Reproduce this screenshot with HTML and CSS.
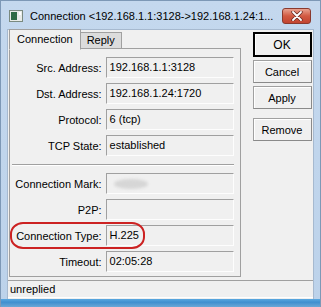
FILE: index.html
```html
<!DOCTYPE html>
<html lang="en">
<head>
    <meta charset="UTF-8">
    <title>Connection</title>
    <link rel="stylesheet" href="styles.css">
</head>
<body>
    <div class="window">
        <div class="titlebar">
            <svg class="app-icon" width="14" height="12" viewBox="0 0 14 12">
                <rect x="0.5" y="0.5" width="13" height="11" fill="#e8ece8" stroke="#7a8a80"/>
                <rect x="2" y="2" width="6" height="8" fill="#2e6b44"/>
                <rect x="10" y="2" width="2" height="3" fill="#ffffff"/>
            </svg>
            <span class="title">Connection &lt;192.168.1.1:3128-&gt;192.168.1.24:1...</span>
            <div class="close">
                <svg width="12" height="10" viewBox="0 0 12 10">
                    <path d="M2 1 L10 9 M10 1 L2 9" stroke="#6b2a22" stroke-width="3.4" stroke-linecap="round"/>
                    <path d="M2 1 L10 9 M10 1 L2 9" stroke="#ffffff" stroke-width="1.8" stroke-linecap="round"/>
                </svg>
            </div>
        </div>
        <div class="client">
            <div class="main">
                <div class="tabs">
                    <div class="tab-row">
                        <div class="tab active">Connection</div>
                        <div class="tab">Reply</div>
                        <div class="tab-fill"></div>
                    </div>
                    <div class="panel">
                        <div class="row"><span class="label">Src. Address:</span><span class="field">192.168.1.1:3128</span></div>
                        <div class="row"><span class="label">Dst. Address:</span><span class="field">192.168.1.24:1720</span></div>
                        <div class="row"><span class="label">Protocol:</span><span class="field">6 (tcp)</span></div>
                        <div class="row"><span class="label">TCP State:</span><span class="field">established</span></div>
                        <div class="separator"></div>
                        <div class="row"><span class="label">Connection Mark:</span><span class="field"><span class="blur"></span></span></div>
                        <div class="row"><span class="label">P2P:</span><span class="field"></span></div>
                        <div class="row marked"><span class="label">Connection Type:</span><span class="field">H.225</span><span class="ring"></span></div>
                        <div class="row"><span class="label">Timeout:</span><span class="field">02:05:28</span></div>
                    </div>
                </div>
                <div class="buttons">
                    <button class="default">OK</button>
                    <button>Cancel</button>
                    <button>Apply</button>
                    <button class="spaced">Remove</button>
                </div>
            </div>
            <div class="statusbar">unreplied</div>
        </div>
        <div class="bottom-frame"></div>
    </div>
</body>
</html>
```

FILE: styles.css
```css
body {
    margin: 0;
    width: 321px;
    height: 307px;
    overflow: hidden;
    font-family: 'Liberation Sans', Arial, sans-serif;
    font-size: 11px;
    color: #000;
}
.window {
    box-sizing: border-box;
    width: 321px;
    height: 307px;
    display: flex;
    flex-direction: column;
    background: linear-gradient(#c4d8ee, #bcd2ea);
    border: 1px solid #7d98b6;
    border-bottom: none;
}
.titlebar {
    height: 28px;
    flex: none;
    display: flex;
    align-items: center;
    padding: 0 9px 0 8px;
    gap: 7px;
}
.app-icon {
    margin-top: 1px;
}
.title {
    flex: 1;
    font-size: 11px;
    color: #000;
    white-space: nowrap;
    overflow: hidden;
    margin-top: 2px;
}
.close {
    width: 27px;
    height: 14px;
    margin-top: 1px;
    border: 1px solid #8a3a2e;
    border-radius: 3px;
    background: linear-gradient(#e8a290, #d25a42 50%, #c24430);
    display: flex;
    align-items: center;
    justify-content: center;
}
.client {
    flex: 1;
    margin: 0 6px;
    background: #f0f0f0;
    border: 1px solid #a6b9cf;
    border-bottom: none;
    display: flex;
    flex-direction: column;
}
.main {
    flex: 1;
    display: flex;
    padding: 0 0 0 1px;
}
.tabs {
    width: 232px;
    display: flex;
    flex-direction: column;
}
.tab-row {
    display: flex;
    align-items: flex-end;
    height: 19px;
}
.tab {
    height: 15px;
    padding: 0 6px;
    line-height: 15px;
    border: 1px solid #a0a0a0;
    background: #dcdcdc;
    margin-left: -1px;
}
.tab.active {
    height: 19px;
    line-height: 18px;
    background: #f0f0f0;
    border-bottom: 1px solid #f0f0f0;
    margin-left: 0;
    padding: 0 7px;
    position: relative;
    z-index: 1;
    margin-bottom: -1px;
}
.tab-fill {
    flex: 1;
    border-bottom: 1px solid #a0a0a0;
}
.panel {
    height: 219px;
    border: 1px solid #a0a0a0;
    border-top: none;
    padding: 8px 6px 0 1px;
    display: flex;
    flex-direction: column;
    gap: 5px;
}
.row {
    display: flex;
    align-items: center;
    gap: 4px;
    position: relative;
}
.label {
    width: 91px;
    text-align: right;
    white-space: nowrap;
}
.field {
    box-sizing: border-box;
    width: 129px;
    height: 21px;
    line-height: 19px;
    padding-left: 3px;
    border: 1px solid #a0a0a0;
    border-right-color: #fdfdfd;
    border-bottom-color: #fdfdfd;
    background: #f0f0f0;
    position: relative;
    overflow: hidden;
}
.blur {
    position: absolute;
    left: 7px;
    top: 5px;
    width: 34px;
    height: 10px;
    border-radius: 50%;
    background: #d6d6d6;
    filter: blur(1.5px);
}
.separator {
    margin: 3px 0 2px 1px;
    border-top: 1px solid #a0a0a0;
    border-bottom: 1px solid #ffffff;
}
.ring {
    position: absolute;
    left: -1px;
    top: -3px;
    width: 131px;
    height: 23px;
    border: 2px solid #cc2222;
    border-radius: 13px / 12px;
}
.buttons {
    flex: 1;
    display: flex;
    flex-direction: column;
    align-items: center;
    padding-top: 2px;
    padding-left: 10px;
    gap: 3px;
}
button {
    width: 59px;
    height: 23px;
    padding: 0;
    font-family: 'Liberation Sans', Arial, sans-serif;
    font-size: 11px;
    color: #000;
    background: #f0f0f0;
    border: 1px solid #a0a0a0;
    border-right-color: #8a8a8a;
    border-bottom-color: #8a8a8a;
    box-shadow: inset 1px 1px 0 #ffffff;
}
button.default {
    height: 25px;
    border: 2px solid #000;
    font-size: 12px;
}
button.spaced {
    margin-top: 6px;
}
.statusbar {
    height: 16px;
    flex: none;
    margin: 3px 0 1px 0;
    border-top: 1px solid #a0a0a0;
    border-bottom: 1px solid #fff;
    padding-left: 2px;
    line-height: 16px;
}
.bottom-frame {
    height: 8px;
    flex: none;
    background: linear-gradient(#5aa8e0, #3f8fcf 40%, #6aa7d6);
}
```
